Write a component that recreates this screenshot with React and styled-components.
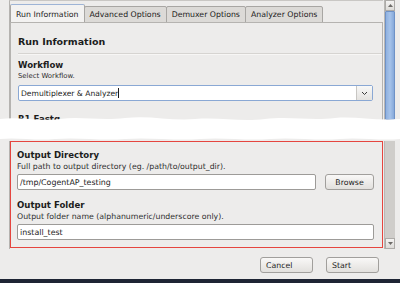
import React from 'react';
import styled, { createGlobalStyle } from 'styled-components';

const GlobalStyle = createGlobalStyle`
  html, body {
    margin: 0;
    padding: 0;
    background: #ffffff;
  }
  body {
    font-family: "DejaVu Sans", "Liberation Sans", sans-serif;
    color: #1c1c1c;
  }
`;

const Window = styled.div`
  width: 400px;
  height: 283px;
  overflow: hidden;
  background: #edeceb;
  display: flex;
  flex-direction: column;
`;

const Slice = styled.div`
  height: ${props => props.h}px;
  overflow: hidden;
  display: flex;
  padding-left: 9px;
  flex-shrink: 0;
`;

const Viewport = styled.div`
  width: 373px;
  display: flex;
  flex-direction: column;
  border-left: 1px solid #b5b3b0;
  padding-top: ${props => props.top ? 3 : 0}px;
  border-top: ${props => props.top ? '1px solid #c9c7c4' : 'none'};
`;

const TabBar = styled.div`
  display: flex;
  align-items: flex-end;
  height: 19px;
`;

const Tab = styled.div`
  height: ${props => props.active ? 19 : 17}px;
  box-sizing: border-box;
  padding: 0 5px;
  font-size: 7.8px;
  display: flex;
  align-items: center;
  border: 1px solid #a8a6a3;
  border-bottom: ${props => props.active ? 'none' : '1px solid #a8a6a3'};
  border-top-color: ${props => props.active ? '#9eb4d6' : '#a8a6a3'};
  border-radius: 2px 2px 0 0;
  background: ${props => props.active ? '#f3f2f1' : '#dcdad7'};
  margin-left: ${props => props.first ? 0 : -1}px;
  white-space: nowrap;
`;

const Panel = styled.div`
  flex: 1;
  border: 1px solid #b5b3b0;
  border-bottom: none;
  margin-top: -1px;
  padding: 12px 9px 0 7px;
  background: #edeceb;
`;

const Heading = styled.div`
  font-size: 9.5px;
  font-weight: bold;
  height: 13px;
  line-height: 13px;
`;

const Rule = styled.div`
  height: 1px;
  background: #d6d4d1;
  border-bottom: 1px solid #f7f6f5;
  margin: 5px -9px 5px 0;
`;

const Label = styled.div`
  font-size: 8.6px;
  font-weight: bold;
  line-height: 11px;
  margin-top: ${props => props.gap || 0}px;
`;

const Hint = styled.div`
  font-size: ${props => props.size || 7.8}px;
  line-height: 11px;
  color: #2e2e2e;
`;

const Row = styled.div`
  display: flex;
  align-items: center;
  gap: 9px;
  margin-top: ${props => props.gap || 2}px;
`;

const Field = styled.div`
  flex: 1;
  height: 16px;
  box-sizing: border-box;
  background: #ffffff;
  border: 1px solid ${props => props.focus ? '#8aa8d4' : '#9d9b98'};
  border-radius: 2px;
  display: flex;
  align-items: center;
  padding-left: 2px;
  font-size: ${props => props.size || 7.6}px;
  white-space: nowrap;
`;

const Caret = styled.span`
  display: inline-block;
  width: 1px;
  height: 10px;
  background: #1c1c1c;
`;

const DropButton = styled.div`
  margin-left: auto;
  width: 15px;
  height: 14px;
  border-left: 1px solid #c8c6c3;
  background: linear-gradient(#f8f8f7, #e4e2df);
  display: flex;
  align-items: center;
  justify-content: center;
`;

const Button = styled.div`
  width: ${props => props.w}px;
  height: 16px;
  box-sizing: border-box;
  border: 1px solid #a19f9c;
  border-radius: 3px;
  background: linear-gradient(#f9f8f7, #e2e0dd);
  font-size: 7.8px;
  display: flex;
  align-items: center;
  justify-content: ${props => props.center ? 'center' : 'flex-start'};
  padding-left: ${props => props.center ? 0 : 5}px;
`;

const Scrollbar = styled.div`
  width: 10px;
  margin-left: 1px;
  display: flex;
  flex-direction: column;
  background: #cfcdca;
  border-left: 1px solid #b9b7b4;
`;

const Arrow = styled.div`
  height: 9px;
  background: linear-gradient(#f4f3f2, #dddbd8);
  border: 1px solid #adaba8;
  display: flex;
  align-items: center;
  justify-content: center;
`;

const Thumb = styled.div`
  flex: 1;
  background: linear-gradient(90deg, #8fb1e0, #a6c3ea 50%, #86a9da);
  border: 1px solid #6f92c6;
  border-radius: 1px;
`;

const Track = styled.div`
  flex: 1;
`;

const Tear = styled.svg`
  display: block;
  position: relative;
  z-index: 1;
  margin: -5px 0 0;
  flex-shrink: 0;
`;

const Marked = styled.div`
  border: 1.5px solid #e5453f;
  padding: 8px 8px 5px 6px;
  height: 107px;
  box-sizing: border-box;
`;

const Footer = styled.div`
  flex: 1;
  display: flex;
  justify-content: flex-end;
  align-items: center;
  gap: 13px;
  padding-right: 21px;
  padding-top: 2px;
`;

const BottomBar = styled.div`
  height: 4px;
  background: #1e2434;
  flex-shrink: 0;
`;

const Chevron = () => (
  <svg width="7" height="5" viewBox="0 0 7 5">
    <path d="M1 1 L3.5 3.5 L6 1" fill="none" stroke="#3a3a3a" strokeWidth="1" />
  </svg>
);

const SmallArrow = ({ up }) => (
  <svg width="5" height="3" viewBox="0 0 5 3">
    <path d={up ? 'M0 3 L2.5 0 L5 3 Z' : 'M0 0 L2.5 3 L5 0 Z'} fill="#6c6a67" />
  </svg>
);

const tabs = ['Run Information', 'Advanced Options', 'Demuxer Options', 'Analyzer Options'];

const App = () => {
  return (
    <>
      <GlobalStyle />
      <Window>
        <Slice h={120}>
          <Viewport top>
            <TabBar>
              {tabs.map((t, i) => (
                <Tab key={t} active={i === 0} first={i === 0}>{t}</Tab>
              ))}
            </TabBar>
            <Panel>
              <Heading>Run Information</Heading>
              <Rule />
              <Label>Workflow</Label>
              <Hint size={6.9}>Select Workflow.</Hint>
              <Row gap={3}>
                <Field focus>
                  Demultiplexer &amp; Analyzer<Caret />
                  <DropButton><Chevron /></DropButton>
                </Field>
              </Row>
              <Label gap={13}>R1 Fastq</Label>
            </Panel>
          </Viewport>
          <Scrollbar>
            <Arrow><SmallArrow up /></Arrow>
            <Thumb />
          </Scrollbar>
        </Slice>
        <Tear width="400" height="26" viewBox="0 0 400 26">
          <path
            d="M0 4 C20 1 40 7 60 4 C80 1 100 6 125 3 C150 0 170 6 195 4 C220 2 240 7 265 4 C290 1 310 6 335 3 C355 1 375 6 400 4
               L400 24 C380 26 360 22 340 24 C315 26 295 22 270 24 C245 26 225 22 200 24 C175 26 150 22 125 24 C100 26 80 22 55 24 C35 26 18 22 0 24 Z"
            fill="#ffffff"
          />
        </Tear>
        <Slice h={108}>
          <Viewport>
            <Marked>
              <Label>Output Directory</Label>
              <Hint>Full path to output directory (eg. /path/to/output_dir).</Hint>
              <Row>
                <Field size={7.9}>/tmp/CogentAP_testing</Field>
                <Button w={49} center>Browse</Button>
              </Row>
              <Label gap={10}>Output Folder</Label>
              <Hint>Output folder name (alphanumeric/underscore only).</Hint>
              <Row>
                <Field size={7.9}>install_test</Field>
              </Row>
            </Marked>
          </Viewport>
          <Scrollbar>
            <Track />
            <Arrow><SmallArrow /></Arrow>
          </Scrollbar>
        </Slice>
        <Footer>
          <Button w={53}>Cancel</Button>
          <Button w={53}>Start</Button>
        </Footer>
        <BottomBar />
      </Window>
    </>
  );
};

export default App;
